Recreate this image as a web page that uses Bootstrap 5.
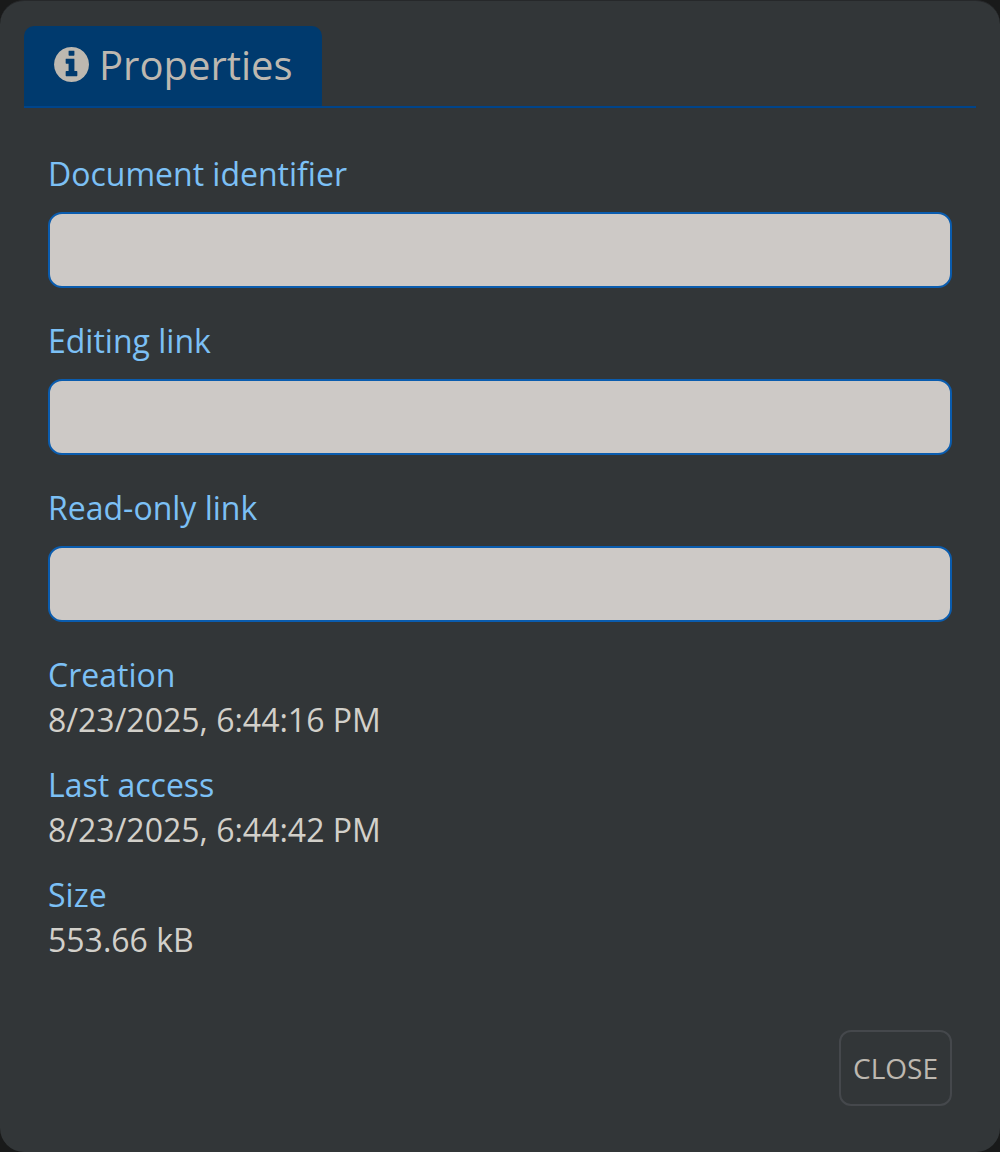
<!DOCTYPE html>
<html lang="en">
<head>
<meta charset="utf-8">
<title>Properties</title>
<link href="https://cdn.jsdelivr.net/npm/bootstrap@5.3.0/dist/css/bootstrap.min.css" rel="stylesheet">
<style>
html,body{height:100%;}
body{background:#191a1a;font-family:"Open Sans",sans-serif;font-size:32px;line-height:45px;}
.dlg{height:1152px;background:#323638;border-radius:24px;padding:25px 24px 0;border-top:1px solid #26282a;}
.tabbar{border-bottom:2px solid #00448a;height:82px;}
.tabitem{background:#003a6e;color:#bdb8b0;width:298px;height:80px;border-radius:10px 10px 0 0;font-size:40px;gap:10px;padding-left:30px;padding-bottom:3px;}
.tabitem svg{width:35px;height:35px;flex:none;}
.pane{padding:43px 24px 0;}
.lbl{color:#7cc0f5;}
.fld{height:76px;background:#cdc9c6;border:2px solid #0a5cae;border-radius:14px;margin:16px 0 30px;}
.val{color:#d2d0ca;}
.meta{margin-bottom:20px;}
.footer-row{margin-top:48px;}
.closer{width:113px;height:76px;background:transparent;border:2px solid #45484c;border-radius:12px;color:#bdb8b0;font-size:28px;padding:0;}
</style>
</head>
<body>
<div class="dlg d-flex flex-column">
  <div class="tabbar">
    <div class="tabitem d-flex align-items-center">
      <svg viewBox="0 128 1536 1536"><path fill="#bdb8b0" d="M1024 1376v-160q0-14-9-23t-23-9h-96v-512q0-14-9-23t-23-9h-320q-14 0-23 9t-9 23v160q0 14 9 23t23 9h96v320h-96q-14 0-23 9t-9 23v160q0 14 9 23t23 9h448q14 0 23-9t9-23zm-128-896v-160q0-14-9-23t-23-9h-192q-14 0-23 9t-9 23v160q0 14 9 23t23 9h192q14 0 23-9t9-23zm640 416q0 209-103 385t-279 279-385 103-385-103-279-279-103-385 103-385 279-279 385-103 385 103 279 279 103 385z"/></svg>
      <span>Properties</span>
    </div>
  </div>
  <div class="pane flex-grow-1 d-flex flex-column">
    <div class="lbl">Document identifier</div>
    <div class="fld"></div>
    <div class="lbl">Editing link</div>
    <div class="fld"></div>
    <div class="lbl">Read-only link</div>
    <div class="fld"></div>
    <div class="meta"><div class="lbl">Creation</div><div class="val">8/23/2025, 6:44:16 PM</div></div>
    <div class="meta"><div class="lbl">Last access</div><div class="val">8/23/2025, 6:44:42 PM</div></div>
    <div class="meta"><div class="lbl">Size</div><div class="val">553.66 kB</div></div>
    <div class="d-flex justify-content-end footer-row"><button type="button" class="btn closer">CLOSE</button></div>
  </div>
</div>
</body>
</html>
